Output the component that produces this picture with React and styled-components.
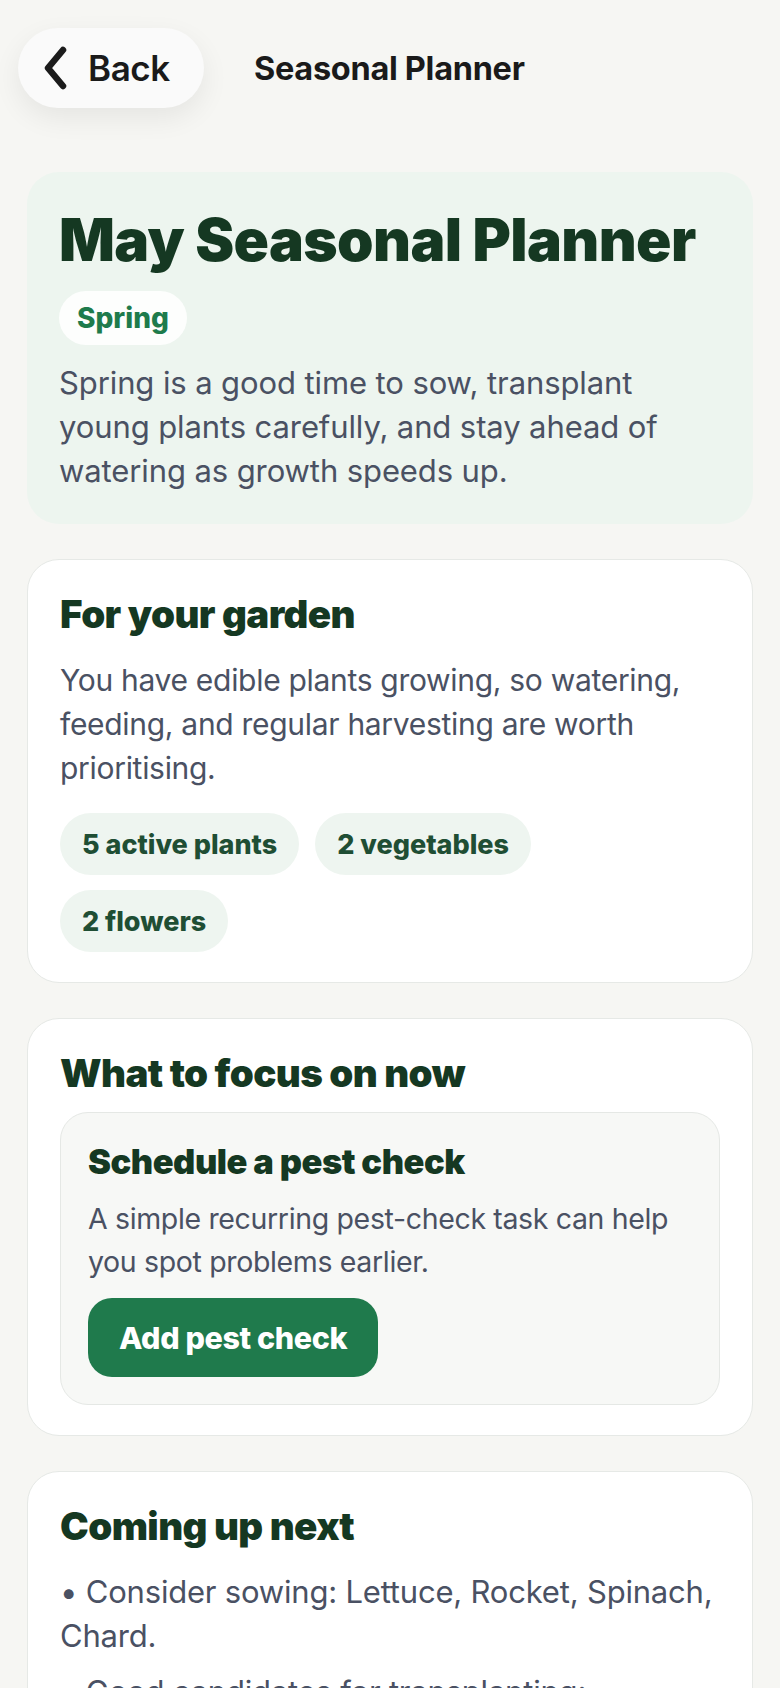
import React from 'react'
import styled, { createGlobalStyle } from 'styled-components'

const GlobalStyle = createGlobalStyle`
  body {
    margin: 0;
    background: #f6f6f3;
    font-family: Inter, "Noto Sans", sans-serif;
    -webkit-font-smoothing: antialiased;
  }
`

const chips = ['5 active plants', '2 vegetables', '2 flowers']

const upcoming = [
  'Consider sowing: Lettuce, Rocket, Spinach, Chard.',
  'Good candidates for transplanting: Tomatoes, Courgettes, Beans.',
]

function BackChevron() {
  return (
    <svg width='28' height='44' viewBox='0 0 28 44' fill='none'>
      <path
        d='M21 4 L6 22 L21 40'
        stroke='#1b1b1b'
        strokeWidth='6.5'
        strokeLinecap='round'
        strokeLinejoin='round'
      />
    </svg>
  )
}

export default function App() {
  return (
    <>
      <GlobalStyle />
      <Page>
        <Header>
          <BackButton>
            <BackChevron />
            <span>Back</span>
          </BackButton>
          <HeaderTitle>Seasonal Planner</HeaderTitle>
        </Header>

        <Stack>
          <Hero>
            <HeroTitle>May Seasonal Planner</HeroTitle>
            <SeasonPill>Spring</SeasonPill>
            <HeroText>
              Spring is a good time to sow, transplant young plants carefully,
              and stay ahead of watering as growth speeds up.
            </HeroText>
          </Hero>

          <Card>
            <CardTitle>For your garden</CardTitle>
            <BodyText>
              You have edible plants growing, so watering, feeding, and regular
              harvesting are worth prioritising.
            </BodyText>
            <ChipRow>
              {chips.map((c) => (
                <Chip key={c}>{c}</Chip>
              ))}
            </ChipRow>
          </Card>

          <Card>
            <CardTitle>What to focus on now</CardTitle>
            <FocusBox>
              <FocusTitle>Schedule a pest check</FocusTitle>
              <FocusText>
                A simple recurring pest-check task can help you spot problems
                earlier.
              </FocusText>
              <PrimaryButton>Add pest check</PrimaryButton>
            </FocusBox>
          </Card>

          <Card>
            <CardTitle>Coming up next</CardTitle>
            <List>
              {upcoming.map((item) => (
                <ListItem key={item}>• {item}</ListItem>
              ))}
            </List>
          </Card>
        </Stack>
      </Page>
    </>
  )
}

const Page = styled.div`
  padding: 0 27px 40px;
  box-sizing: border-box;
  width: 780px;
`

const Header = styled.header`
  display: flex;
  align-items: center;
  gap: 50px;
  padding-top: 28px;
  margin-left: -9px;
`

const BackButton = styled.button`
  display: flex;
  align-items: center;
  gap: 18px;
  height: 80px;
  width: 186px;
  padding: 0 0 0 24px;
  border: none;
  border-radius: 40px;
  background: #fafafa;
  box-shadow: 0 10px 28px rgba(0, 0, 0, 0.07);
  font-family: Inter, sans-serif;
  font-size: 35px;
  font-weight: 600;
  color: #1a1a1a;
  cursor: pointer;
  span {
    letter-spacing: -0.4px;
  }
`

const HeaderTitle = styled.h1`
  margin: 0;
  font-size: 32.5px;
  font-weight: 700;
  color: #1a1a1a;
  letter-spacing: -0.3px;
`

const Stack = styled.main`
  display: flex;
  flex-direction: column;
  gap: 35px;
  margin-top: 64px;
`

const Hero = styled.section`
  display: flex;
  flex-direction: column;
  align-items: flex-start;
  padding: 36px 32px 31px;
  border-radius: 32px;
  background: #edf5ef;
`

const HeroTitle = styled.h2`
  margin: 0 0 19px;
  font-size: 58.5px;
  line-height: 64px;
  font-weight: 900;
  color: #153822;
  letter-spacing: -0.6px;
`

const SeasonPill = styled.span`
  display: inline-flex;
  align-items: center;
  height: 54px;
  padding: 0 18px;
  border-radius: 27px;
  background: #fdfefd;
  font-size: 28px;
  font-weight: 800;
  color: #1e7b4c;
  margin-bottom: 16px;
`

const BodyText = styled.p`
  margin: 22px 0 0;
  font-size: 30px;
  line-height: 44px;
  color: #4a5163;
  letter-spacing: -0.3px;
`

const HeroText = styled(BodyText)`
  margin: 0;
  font-size: 31px;
  letter-spacing: -0.1px;
`

const Card = styled.section`
  padding: 32px 32px 30px;
  border-radius: 32px;
  border: 1px solid #e6e9e6;
  background: #ffffff;
`

const CardTitle = styled.h3`
  margin: 0;
  font-size: 38.5px;
  line-height: 44px;
  font-weight: 900;
  color: #153822;
  letter-spacing: -0.6px;
`

const ChipRow = styled.div`
  display: flex;
  flex-wrap: wrap;
  gap: 15px 16px;
  margin-top: 23px;
  max-width: 620px;
`

const Chip = styled.span`
  display: inline-flex;
  align-items: center;
  height: 62px;
  padding: 0 22px;
  border-radius: 31px;
  background: #eef5f0;
  font-size: 27px;
  font-weight: 800;
  color: #1f4e34;
`

const FocusBox = styled.div`
  margin-top: 17px;
  padding: 30px 27px 27px;
  border-radius: 28px;
  border: 1px solid #e5e8e5;
  background: #f7f8f6;
  display: flex;
  flex-direction: column;
  align-items: flex-start;
`

const FocusTitle = styled.h4`
  margin: 0;
  font-size: 34.5px;
  line-height: 38px;
  font-weight: 900;
  color: #153822;
  letter-spacing: -0.5px;
`

const FocusText = styled.p`
  margin: 16px 0 15px;
  font-size: 28.5px;
  line-height: 43px;
  color: #4a5163;
  letter-spacing: -0.35px;
`

const PrimaryButton = styled.button`
  height: 79px;
  padding: 0 31px;
  border: none;
  border-radius: 24px;
  background: #1f7a4c;
  color: #ffffff;
  font-family: Inter, sans-serif;
  font-size: 30.5px;
  font-weight: 800;
  letter-spacing: -0.4px;
  cursor: pointer;
`

const List = styled.ul`
  list-style: none;
  margin: 22px 0 0;
  padding: 0;
  display: flex;
  flex-direction: column;
  gap: 12px;
`

const ListItem = styled.li`
  font-size: 31px;
  line-height: 44px;
  color: #4a5163;
  letter-spacing: -0.2px;
`
